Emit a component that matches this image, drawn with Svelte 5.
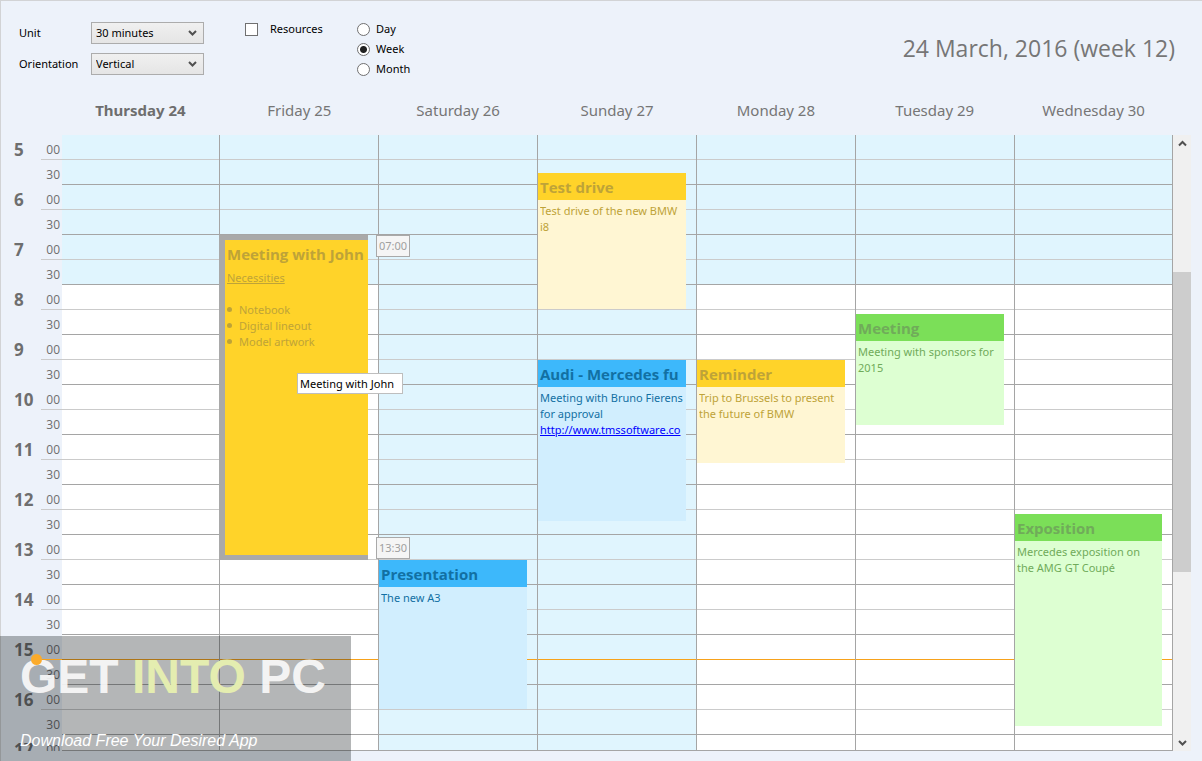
<script lang="ts">
  interface Appointment {
    title: string;
    lines: string[];
    start: number;
    end: number;
    color: 'yellow' | 'blue' | 'green';
    link?: string;
    heading?: string;
    items?: string[];
    selected?: boolean;
  }

  interface Day {
    name: string;
    today?: boolean;
    weekend?: boolean;
    appointments: Appointment[];
  }

  const FIRST_HOUR = 5;
  const HOUR_HEIGHT = 50;
  const WORK_START = 8;
  const NOW_SLOT = 15;

  let unit = $state('30 minutes');
  let orientation = $state('Vertical');
  let resources = $state(false);
  let view = $state('Week');

  const days: Day[] = [
    { name: 'Thursday 24', today: true, appointments: [] },
    {
      name: 'Friday 25',
      appointments: [
        {
          title: 'Meeting with John',
          heading: 'Necessities',
          items: ['Notebook', 'Digital lineout', 'Model artwork'],
          lines: [],
          start: 7,
          end: 13.5,
          color: 'yellow',
          selected: true
        }
      ]
    },
    {
      name: 'Saturday 26',
      weekend: true,
      appointments: [
        { title: 'Presentation', lines: ['The new A3'], start: 13.5, end: 16.48, color: 'blue' }
      ]
    },
    {
      name: 'Sunday 27',
      weekend: true,
      appointments: [
        { title: 'Test drive', lines: ['Test drive of the new BMW', 'i8'], start: 5.76, end: 8.48, color: 'yellow' },
        {
          title: 'Audi - Mercedes fu',
          lines: ['Meeting with Bruno Fierens', 'for approval'],
          link: 'http://www.tmssoftware.co',
          start: 9.5,
          end: 12.72,
          color: 'blue'
        }
      ]
    },
    {
      name: 'Monday 28',
      appointments: [
        { title: 'Reminder', lines: ['Trip to Brussels to present', 'the future of BMW'], start: 9.5, end: 11.56, color: 'yellow' }
      ]
    },
    {
      name: 'Tuesday 29',
      appointments: [
        { title: 'Meeting', lines: ['Meeting with sponsors for', '2015'], start: 8.58, end: 10.8, color: 'green' }
      ]
    },
    {
      name: 'Wednesday 30',
      appointments: [
        { title: 'Exposition', lines: ['Mercedes exposition on', 'the AMG GT Coupé'], start: 12.58, end: 16.82, color: 'green' }
      ]
    }
  ];

  const slots = Array.from({ length: 25 }, (_, i) => ({
    hour: FIRST_HOUR + Math.floor(i / 2),
    half: i % 2 === 1
  }));

  function offset(hour: number) {
    return Math.round((hour - FIRST_HOUR) * HOUR_HEIGHT);
  }

  function place(a: Appointment) {
    return `top: ${offset(a.start)}px; height: ${offset(a.end) - offset(a.start)}px`;
  }

  function time(hour: number) {
    const h = String(Math.floor(hour)).padStart(2, '0');
    return `${h}:${hour % 1 ? '30' : '00'}`;
  }
</script>

<div class="planner">
  <header class="toolbar">
    <div class="fields">
      <label for="unit">Unit</label>
      <div class="select">
        <select id="unit" bind:value={unit}>
          <option>30 minutes</option>
          <option>60 minutes</option>
        </select>
        <svg width="9" height="7" viewBox="0 0 9 7"><path d="M1 1 L4.5 4.5 L8 1" /></svg>
      </div>
      <label for="orientation">Orientation</label>
      <div class="select">
        <select id="orientation" bind:value={orientation}>
          <option>Vertical</option>
          <option>Horizontal</option>
        </select>
        <svg width="9" height="7" viewBox="0 0 9 7"><path d="M1 1 L4.5 4.5 L8 1" /></svg>
      </div>
    </div>

    <label class="check">
      <input type="checkbox" bind:checked={resources} />
      Resources
    </label>

    <div class="views">
      {#each ['Day', 'Week', 'Month'] as option}
        <label>
          <input type="radio" name="view" value={option} bind:group={view} />
          {option}
        </label>
      {/each}
    </div>

    <h1>24 March, 2016 (week 12)</h1>
  </header>

  <div class="day-names">
    {#each days as day}
      <div class="day-name" class:today={day.today}>{day.name}</div>
    {/each}
  </div>

  <div class="board">
    <div class="times">
      {#each slots as slot, i}
        <div class="time-slot">
          <span class="hour">{slot.half ? '' : slot.hour}</span>
          <span class="minute" class:line={!slot.half && i < slots.length - 1}>{slot.half ? '30' : '00'}</span>
        </div>
      {/each}
    </div>

    <div class="days">
      {#each days as day}
        <div class="day" class:weekend={day.weekend}>
          {#each slots as slot}
            <div
              class="slot"
              class:off={slot.hour < WORK_START}
              class:half={slot.half}
              class:current={slot.hour === NOW_SLOT && !slot.half}
            ></div>
          {/each}
          {#each day.appointments as item}
            <article class="appointment {item.color}" class:selected={item.selected} style={place(item)}>
              <h2>{item.title}</h2>
              <div class="text">
                {#if item.heading}
                  <u>{item.heading}</u>
                {/if}
                {#if item.items}
                  <ul>
                    {#each item.items as entry}
                      <li>{entry}</li>
                    {/each}
                  </ul>
                {/if}
                {#each item.lines as line}
                  <div>{line}</div>
                {/each}
                {#if item.link}
                  <a href={item.link}>{item.link}</a>
                {/if}
              </div>
            </article>
            {#if item.selected}
              <div class="time-tip" style="top: {offset(item.start)}px">{time(item.start)}</div>
              <div class="time-tip" style="top: {offset(item.end) - 23}px">{time(item.end)}</div>
              <div class="hint" role="tooltip">{item.title}</div>
            {/if}
          {/each}
        </div>
      {/each}
    </div>

    <div class="scrollbar">
      <button aria-label="Scroll up">
        <svg width="9" height="7" viewBox="0 0 9 7"><path d="M1 5.5 L4.5 2 L8 5.5" /></svg>
      </button>
      <div class="track"><div class="thumb"></div></div>
      <button aria-label="Scroll down">
        <svg width="9" height="7" viewBox="0 0 9 7"><path d="M1 1 L4.5 4.5 L8 1" /></svg>
      </button>
    </div>

    <div class="now" style="top: {offset(NOW_SLOT + 0.5) - 1}px"></div>
  </div>

  <div class="watermark">
    <div class="brand">GET <span>INTO</span> PC</div>
    <div class="tagline">Download Free Your Desired App</div>
  </div>
</div>

<style>
  :global(body) {
    background: #edf2fa;
  }
  .planner {
    position: relative;
    box-sizing: border-box;
    min-height: 100vh;
    padding: 0 11px 10px 0;
    border-top: 1px solid #d2d3d5;
    border-left: 1px solid #d2d3d5;
    background: #edf2fa;
    color: #000;
    font: 11px/16px "Noto Sans", "Open Sans", sans-serif;
  }
  .planner svg {
    fill: none;
    stroke: #505050;
    stroke-width: 2;
  }

  /* Toolbar */
  .toolbar {
    display: flex;
    align-items: flex-start;
    box-sizing: border-box;
    height: 85px;
    padding: 20px 16px 0 18px;
  }
  .fields {
    display: grid;
    grid-template-columns: 72px 113px;
    gap: 9px 0;
    align-items: center;
    margin: 1px 41px 0 0;
  }
  .select {
    position: relative;
  }
  .select select {
    display: block;
    width: 100%;
    height: 22px;
    padding: 0 4px;
    border: 1px solid #acacac;
    border-radius: 0;
    background: linear-gradient(#f0f0f0, #e5e5e5);
    color: #000;
    font: inherit;
    appearance: none;
  }
  .select svg {
    position: absolute;
    top: 8px;
    right: 7px;
    pointer-events: none;
  }
  .check,
  .views label {
    display: flex;
    align-items: center;
    height: 16px;
  }
  .check {
    width: 112px;
  }
  .views {
    display: flex;
    flex-direction: column;
    gap: 4px;
  }
  .toolbar input {
    flex: none;
    box-sizing: border-box;
    width: 13px;
    height: 13px;
    margin: 0 6px 0 0;
    border: 1px solid #707070;
    background: #fff;
    appearance: none;
  }
  .check input {
    margin-right: 12px;
  }
  .toolbar input:checked {
    background: #212121;
  }
  .toolbar input[type="radio"] {
    border-radius: 50%;
  }
  .toolbar input[type="radio"]:checked {
    background: radial-gradient(circle, #212121 3px, #fff 4px);
  }
  h1 {
    margin: 11px 0 0 auto;
    color: #767676;
    font-family: "Open Sans", "Noto Sans", sans-serif;
    font-size: 23px;
    font-weight: 400;
    line-height: 32px;
  }

  /* Day headers */
  .day-names {
    display: flex;
    margin: 0 18px 1px 60px;
    color: #767676;
    font-size: 15px;
    line-height: 48px;
    text-align: center;
  }
  .day-name {
    flex: 1;
  }
  .today {
    color: #6e6e6e;
    font-weight: 700;
  }

  /* Board */
  .board {
    position: relative;
    display: flex;
  }
  .times {
    width: 61px;
    color: #6e6e6e;
    font-family: "Open Sans", "Noto Sans", sans-serif;
    font-size: 12px;
    overflow: hidden;
  }
  .time-slot {
    display: flex;
    height: 25px;
    line-height: 29px;
  }
  .hour {
    width: 27px;
    padding-left: 13px;
    font-size: 17px;
    font-weight: 700;
  }
  .minute {
    box-sizing: border-box;
    flex: 1;
    padding-right: 2px;
    text-align: right;
  }
  .minute.line {
    border-bottom: 1px solid #cbcbcb;
  }
  .time-slot:nth-child(25) {
    height: 16px;
  }
  .now {
    position: absolute;
    left: 35px;
    z-index: 4;
    width: 26px;
    height: 1px;
    background: #f7a21b;
  }
  .now::before {
    content: "";
    position: absolute;
    top: -5px;
    left: -5px;
    width: 11px;
    height: 11px;
    border-radius: 50%;
    background: #fbab2c;
  }
  .days {
    display: flex;
    flex: 1;
  }
  .day {
    position: relative;
    box-sizing: border-box;
    flex: 159;
    min-width: 0;
    border-right: 1px solid #a5a5a5;
    background: #fff;
  }
  .day:first-child,
  .day:last-child {
    flex: 158;
  }
  .slot {
    box-sizing: border-box;
    height: 25px;
    border-bottom: 1px solid #cbcbcb;
  }
  .slot.half,
  .slot:nth-child(25) {
    border-color: #a5a5a5;
  }
  .slot:nth-child(25) {
    height: 16px;
  }
  .slot.current {
    border-color: #f7a21b;
  }
  .weekend,
  .slot.off {
    background: #e0f5fe;
  }

  /* Appointments */
  .appointment {
    position: absolute;
    right: 10px;
    left: 0;
    box-sizing: border-box;
    overflow: hidden;
  }
  .appointment h2 {
    margin: 0;
    padding: 2px 0 0 2px;
    font-family: "Open Sans", "Noto Sans", sans-serif;
    font-size: 15px;
    font-weight: 700;
    line-height: 25px;
    white-space: nowrap;
  }
  .text {
    margin: 3px 2px 0;
    overflow: hidden;
    white-space: nowrap;
  }
  .text a {
    color: #00f;
  }
  .text ul {
    margin: 16px 0 0;
    padding-left: 12px;
    list-style: none;
  }
  .text li::before {
    content: "";
    float: left;
    width: 5px;
    height: 5px;
    margin: 5px 0 0 -12px;
    border-radius: 50%;
    background: currentColor;
  }
  .yellow {
    background: #fff6d3;
    color: #bea338;
  }
  .yellow h2 {
    background: #ffd329;
  }
  .blue {
    background: #d1eefe;
    color: #1270a3;
  }
  .blue h2 {
    background: #3db8fb;
  }
  .green {
    background: #ddffd2;
    color: #70ab5a;
  }
  .green h2 {
    background: #7bdf58;
  }
  .selected {
    left: -1px;
    z-index: 1;
    border: solid #a9a9a9;
    border-width: 5px 0 5px 6px;
    background: #ffd329;
  }
  .time-tip,
  .hint {
    position: absolute;
    z-index: 2;
    border: 1px solid #a9a9a9;
    white-space: nowrap;
  }
  .time-tip {
    left: 100%;
    width: 32px;
    margin-left: -2px;
    padding: 2px 0;
    background: #f5f5f5;
    color: #a0a0a0;
    text-align: center;
  }
  .hint {
    top: 238px;
    left: 77px;
    padding: 2px 8px 1px 2px;
    border-color: #bebebe;
    background: #fff;
  }

  /* Scrollbar */
  .scrollbar {
    display: flex;
    flex-direction: column;
    width: 18px;
    background: #f0f0f0;
  }
  .scrollbar button {
    height: 16px;
    padding: 0;
    border: 0;
    background: none;
    line-height: 0;
  }
  .track {
    flex: 1;
    padding-top: 121px;
  }
  .thumb {
    height: 300px;
    background: #cdcdcd;
  }

  /* Watermark */
  .watermark {
    position: absolute;
    bottom: 0;
    left: -1px;
    z-index: 3;
    box-sizing: border-box;
    width: 351px;
    padding: 15px 20px 10px;
    background: rgba(8, 12, 18, 0.3);
    color: #fff;
    font-family: "Liberation Sans", Arial, sans-serif;
    white-space: nowrap;
  }
  .brand {
    margin-bottom: 28px;
    color: rgba(250, 250, 250, 0.92);
    font-size: 48px;
    font-weight: 700;
    line-height: 52px;
  }
  .brand span {
    color: #e4edb0;
  }
  .tagline {
    font-size: 16px;
    font-style: italic;
    line-height: 20px;
  }
</style>
